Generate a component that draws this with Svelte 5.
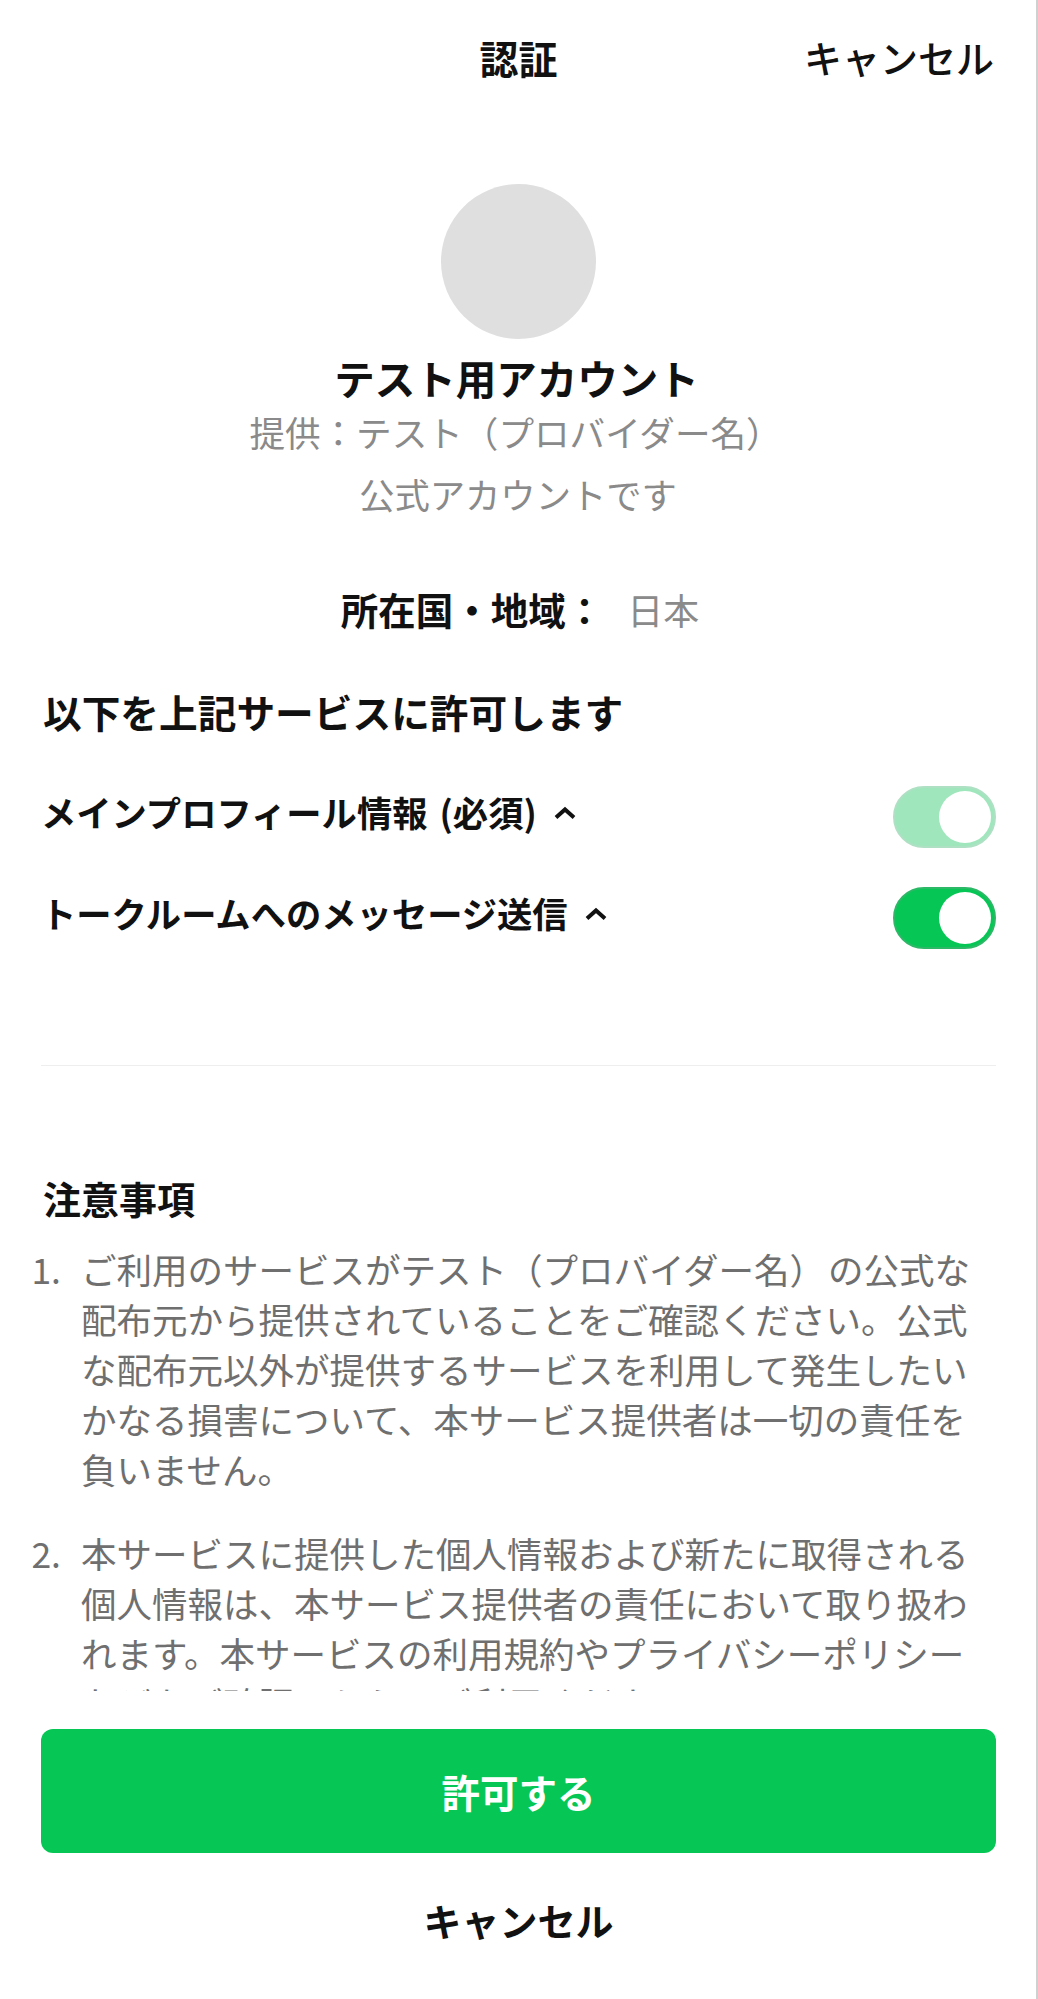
<script>
    const scopes = [
        { label: 'メインプロフィール情報 (必須)', locked: true },
        { label: 'トークルームへのメッセージ送信', locked: false }
    ];

    const notes = [
        'ご利用のサービスがテスト（プロバイダー名） の公式な配布元から提供されていることをご確認ください。公式な配布元以外が提供するサービスを利用して発生したいかなる損害について、本サービス提供者は一切の責任を負いません。',
        '本サービスに提供した個人情報および新たに取得される個人情報は、本サービス提供者の責任において取り扱われます。本サービスの利用規約やプライバシーポリシーなどをご確認のうえ、ご利用ください。'
    ];
</script>

<div class="page">
    <header class="top">
        <h1>認証</h1>
        <span class="top-cancel">キャンセル</span>
    </header>

    <main class="scroll">
        <section class="account">
            <div class="avatar"></div>
            <h2>テスト用アカウント</h2>
            <p class="provider">提供：テスト（プロバイダー名）</p>
            <p class="official">公式アカウントです</p>
            <p class="region"><strong>所在国・地域：</strong><span>日本</span></p>
        </section>

        <section class="scopes">
            <h3>以下を上記サービスに許可します</h3>
            {#each scopes as scope}
                <div class="scope">
                    <span class="scope-label">{scope.label}</span>
                    <svg class="caret" width="24" height="14" viewBox="0 0 24 14">
                        <path d="M3 11.5 L12 3.5 L21 11.5" fill="none" stroke="#111" stroke-width="4" />
                    </svg>
                    <span class="toggle" class:locked={scope.locked}><span class="knob"></span></span>
                </div>
            {/each}
        </section>

        <hr />

        <section class="notes">
            <h3>注意事項</h3>
            <ol>
                {#each notes as note, i}
                    <li>
                        <span class="num">{i + 1}.</span>
                        <span class="note-text">{note}</span>
                    </li>
                {/each}
            </ol>
        </section>
    </main>

    <footer class="actions">
        <button class="allow">許可する</button>
        <button class="cancel">キャンセル</button>
    </footer>
</div>

<style>
    :global(body) {
        margin: 0;
        background: #fff;
    }

    .page {
        box-sizing: border-box;
        width: 1038px;
        height: 1999px;
        display: flex;
        flex-direction: column;
        background: #fff;
        border-right: 2px solid #d0d0d0;
        font-family: "Noto Sans CJK JP", "Noto Sans", sans-serif;
        color: #111;
    }

    h1, h2, h3, p {
        margin: 0;
    }

    .top {
        flex: none;
        height: 120px;
        position: relative;
        display: flex;
        align-items: center;
        justify-content: center;
    }

    .top h1 {
        font-size: 39px;
        font-weight: 700;
        line-height: 50px;
        margin-bottom: 6px;
        margin-left: 1px;
    }

    .top-cancel {
        position: absolute;
        right: 42px;
        top: 32px;
        font-size: 38px;
        line-height: 50px;
        font-weight: 500;
    }

    .scroll {
        flex: none;
        height: 1571px;
        overflow: hidden;
    }

    .account {
        display: flex;
        flex-direction: column;
        align-items: center;
        padding-top: 64px;
    }

    .avatar {
        width: 155px;
        height: 155px;
        border-radius: 50%;
        background: #dfdfdf;
    }

    .account h2 {
        margin-top: 12px;
        font-size: 40.5px;
        line-height: 54px;
        font-weight: 700;
        margin-right: 3px;
    }

    .provider {
        margin-top: 2px;
        font-size: 35.6px;
        line-height: 50px;
        color: #8a8a8a;
        margin-right: 5px;
    }

    .official {
        margin-top: 12px;
        font-size: 35.3px;
        line-height: 50px;
        color: #8a8a8a;
    }

    .region {
        margin-top: 65px;
        font-size: 37.5px;
        line-height: 50px;
        display: flex;
        gap: 24px;
        margin-left: 4px;
    }

    .region strong {
        font-weight: 700;
    }

    .region span {
        color: #8a8a8a;
        font-size: 36px;
    }

    .scopes {
        padding: 0 40px 0 43px;
    }

    .scopes h3 {
        margin-top: 52px;
        font-size: 38.7px;
        line-height: 50px;
        font-weight: 700;
    }

    .scope {
        display: flex;
        align-items: center;
        height: 62px;
        margin-top: 39px;
    }

    .scope:first-of-type {
        margin-top: 50px;
    }

    .scope-label {
        font-size: 35.3px;
        font-weight: 700;
        line-height: 50px;
        padding-bottom: 10px;
        margin-left: -2px;
        word-spacing: 4px;
    }

    .caret {
        margin-left: 16px;
        margin-bottom: 8px;
    }

    .toggle {
        margin-left: auto;
        box-sizing: border-box;
        width: 103px;
        height: 62px;
        border-radius: 31px;
        background: #06c755;
        border: 2px solid #2cb866;
        display: flex;
        align-items: center;
        justify-content: flex-end;
        padding-right: 3px;
    }

    .toggle.locked {
        background: #a0e6bd;
        border-color: #aee0c3;
    }

    .knob {
        width: 52px;
        height: 52px;
        border-radius: 50%;
        background: #fff;
    }

    hr {
        margin: 116px 40px 0 41px;
        border: 0;
        border-top: 1px solid #eeeeee;
    }

    .notes {
        padding: 0 56px 0 43px;
    }

    .notes h3 {
        margin-top: 107px;
        font-size: 38px;
        line-height: 50px;
        font-weight: 700;
    }

    ol {
        list-style: none;
        margin: 21px 0 0;
        padding: 0;
    }

    li {
        display: flex;
        font-size: 35.5px;
        line-height: 50px;
        color: #6f6f6f;
        margin-bottom: 34px;
        word-spacing: -5px;
    }

    .num {
        flex: none;
        width: 40px;
        margin-left: -22px;
        margin-right: 20px;
        text-align: right;
    }

    .note-text {
        flex: 1;
    }

    .actions {
        flex: 1;
        display: flex;
        flex-direction: column;
        align-items: center;
        padding: 38px 40px 0 41px;
    }

    button {
        border: 0;
        font-family: inherit;
        font-weight: 700;
        cursor: pointer;
    }

    .allow {
        width: 100%;
        height: 124px;
        flex: none;
        border-radius: 12px;
        background: #06c755;
        color: #fff;
        font-size: 38.5px;
    }

    .cancel {
        margin-top: 38px;
        background: none;
        color: #111;
        font-size: 38px;
        line-height: 58px;
        padding: 0;
    }
</style>
